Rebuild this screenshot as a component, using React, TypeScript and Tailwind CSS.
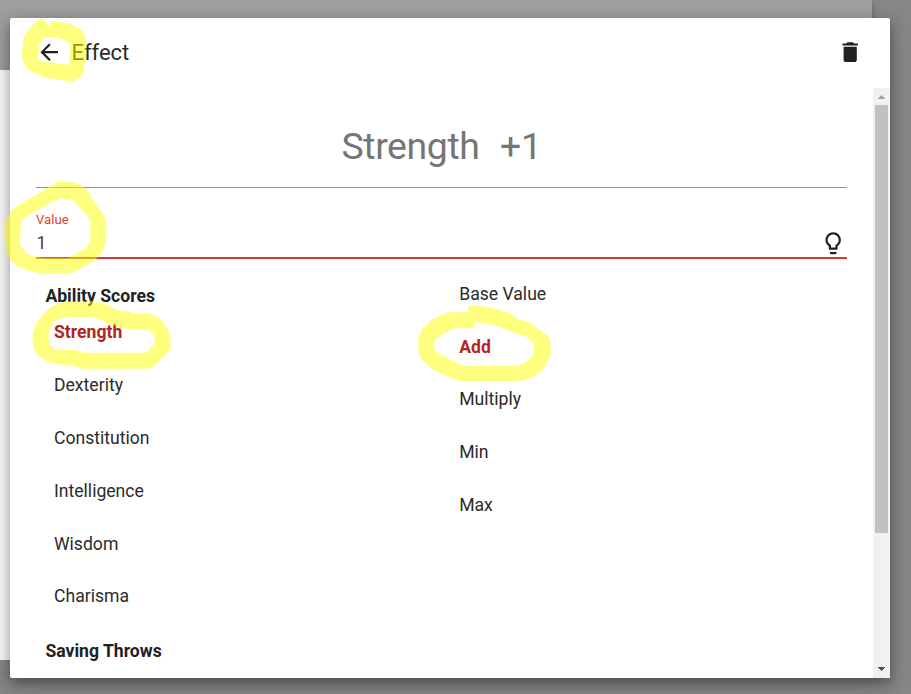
import React from "react";

const abilities = ["Strength", "Dexterity", "Constitution", "Intelligence", "Wisdom", "Charisma"];
const operations = ["Base Value", "Add", "Multiply", "Min", "Max"];

function Option({ label, selected }: { label: string; selected: boolean }) {
  return (
    <li className={`flex h-[52.8px] items-center ${selected ? "font-bold text-[#b3261e]" : ""}`}>
      {label}
    </li>
  );
}

// Translucent marker strokes drawn over the dialog.
function Highlights() {
  return (
    <svg className="pointer-events-none absolute left-0 top-0" width="911" height="694" viewBox="0 0 2733 2082">
      <g fill="#ffff00" fillOpacity="0.5" fillRule="evenodd">
        <path d="M125 54L152 80V63L184 67Q222 72 245 92Q258 106 259 124V160L250 220Q245 233 222 244Q190 244 168 237Q130 235 92 214Q65 196 65 160L71 115Q86 79 125 54ZM152 110L132 115Q118 125 117 145L113 176Q130 188 162 188L205 195L211 158V132Q200 121 184 116L152 110Z" />
        <path transform="translate(0 510)" d="M168 35H205Q244 38 263 63L302 123Q320 145 319 170L317 219Q311 249 280 273Q252 292 215 309L145 311Q85 309 45 284Q16 257 14 219L13 175Q15 138 45 111L122 67Q148 47 168 42ZM191 83L160 94L80 139Q62 151 62 173L60 218Q66 242 90 254Q111 263 145 263H205L243 244Q268 231 271 208L272 157Q265 136 242 117L220 92Q207 83 191 87Z" />
        <path transform="translate(60 840)" d="M145 64H220Q263 71 292 91Q318 91 345 101H388Q424 110 436 137Q452 158 452 178V200Q446 221 423 236Q410 260 380 266H190L160 257Q110 256 70 239Q39 219 38 190V160Q44 133 66 109Q88 72 145 64ZM150 112Q115 112 98 131Q87 146 86 165V188Q92 202 107 207Q140 210 168 211L192 218H370Q389 214 395 200L405 190V176Q398 158 385 149H345Q310 147 297 141L265 132Q238 115 215 112Z" />
        <path transform="translate(1200 840)" d="M205 76H235L300 89Q331 98 357 119Q383 119 402 137L440 165Q452 178 452 195V220Q443 256 420 277Q390 301 350 304H185Q149 295 110 274Q91 266 76 249Q55 233 55 209V178Q58 154 76 137Q103 107 150 97H205ZM224 126V145H163L125 164L103 182V211L128 227L190 257H350Q378 251 396 230Q405 217 402 192L374 166Q350 165 327 152L280 135Z" />
      </g>
    </svg>
  );
}

export default function App() {
  return (
    <div className="relative h-[694px] w-[911px] overflow-hidden bg-[#868686] font-[Roboto,sans-serif] text-[17.6px] text-[#2b2b2b]">
      <div className="absolute left-0 top-0 h-[70px] w-[872px] bg-[#9e9e9e] shadow-[0_2px_6px_rgba(0,0,0,0.3)]" />
      <div className="absolute left-0 top-[70px] h-[590px] w-[200px] bg-[#fafafa]" />
      <main className="absolute left-[10px] top-[18px] flex h-[660px] w-[880px] flex-col rounded-[2px] bg-white shadow-[0_5px_14px_0px_rgba(0,0,0,0.42),0_8px_28px_0px_rgba(0,0,0,0.06)]">
        <header className="flex h-[68px] shrink-0 items-center pl-[26.400px] pr-[26.400px]">
          <svg width="26.4" height="26.4" viewBox="0 0 24 24" fill="#212121">
            <path d="M20 11H7.83l5.59-5.59L12 4l-8 8 8 8 1.41-1.41L7.83 13H20v-2z" />
          </svg>
          <h1 className="ml-[8.800px] flex-1 text-[22px] font-normal">Effect</h1>
          <svg width="26.4" height="26.4" viewBox="0 0 24 24" fill="#212121">
            <path d="M6 19c0 1.1.9 2 2 2h8c1.1 0 2-.9 2-2V7H6v12zM19 4h-3.500l-1-1h-5l-1 1H5v2h14V4z" />
          </svg>
        </header>
        <div className="mt-[2px] flex min-h-0 flex-1">
          <section className="min-w-0 flex-1 overflow-hidden px-[26px]">
            <div className="flex h-[100px] items-center justify-center gap-[20.500px] border-b border-[#919191] pt-[17px] text-[37.4px] tracking-[-0.01em] text-[#757575]">
              <span>Strength</span>
              <span>+1</span>
            </div>
            <div className="flex h-[71px] items-end border-b-2 border-[#d23f31] pb-[1px]">
              <div className="flex-1">
                <div className="text-[13.2px] leading-[22px] text-[#db4437]">Value</div>
                <div className="h-[25px] pl-[0.5px] leading-[25px] text-[#444]">1</div>
              </div>
              <svg className="mr-[0.2px]" width="26.4" height="26.4" viewBox="0 0 24 24" fill="#212121">
                <path d="M9 21c0 .55.45 1 1 1h4c.55 0 1-.45 1-1v-1H9v1zm3-19C8.140 2 5 5.140 5 9c0 2.380 1.190 4.470 3 5.740V17c0 .55.45 1 1 1h6c.55 0 1-.45 1-1v-2.260c1.810-1.270 3-3.360 3-5.740 0-3.860-3.140-7-7-7zm2.850 11.100l-.85.6V16h-4v-2.300l-.85-.6C7.800 12.160 7 10.630 7 9c0-2.760 2.240-5 5-5s5 2.240 5 5c0 1.630-.8 3.160-2.150 4.100z" />
              </svg>
            </div>
            <div className="grid grid-cols-2">
              <div className="pl-[9.400px] pt-[24px]">
                <h2 className="leading-[26px] font-bold text-[#212121]">Ability Scores</h2>
                <ul className="-mt-[2.800px] pl-[8.600px]">
                  {abilities.map((label) => (
                    <Option key={label} label={label} selected={label === "Strength"} />
                  ))}
                </ul>
                <h2 className="mt-[14.800px] leading-[26px] font-bold text-[#212121]">Saving Throws</h2>
              </div>
              <ul className="pl-[17.700px] pt-[8.600px]">
                {operations.map((label) => (
                  <Option key={label} label={label} selected={label === "Add"} />
                ))}
              </ul>
            </div>
          </section>
          <aside className="flex w-[17px] flex-col items-center bg-[#f1f1f1]">
            <div className="flex h-[17px] items-center">
              <svg width="7" height="4" viewBox="0 0 7 4" fill="#a3a3a3"><path d="M3 0h1v1h1v1h1v1h1v1H0V3h1V2h1V1h1z" /></svg>
            </div>
            <div className="h-[428px] w-[13px] bg-[#c1c1c1]" />
            <div className="mt-auto flex h-[17px] items-start pt-[6px]">
              <svg width="7" height="4" viewBox="0 0 7 4" fill="#505050"><path d="M0 0h7v1H6v1H5v1H4v1H3V3H2V2H1V1H0z" /></svg>
            </div>
          </aside>
        </div>
      </main>
      <Highlights />
    </div>
  );
}
